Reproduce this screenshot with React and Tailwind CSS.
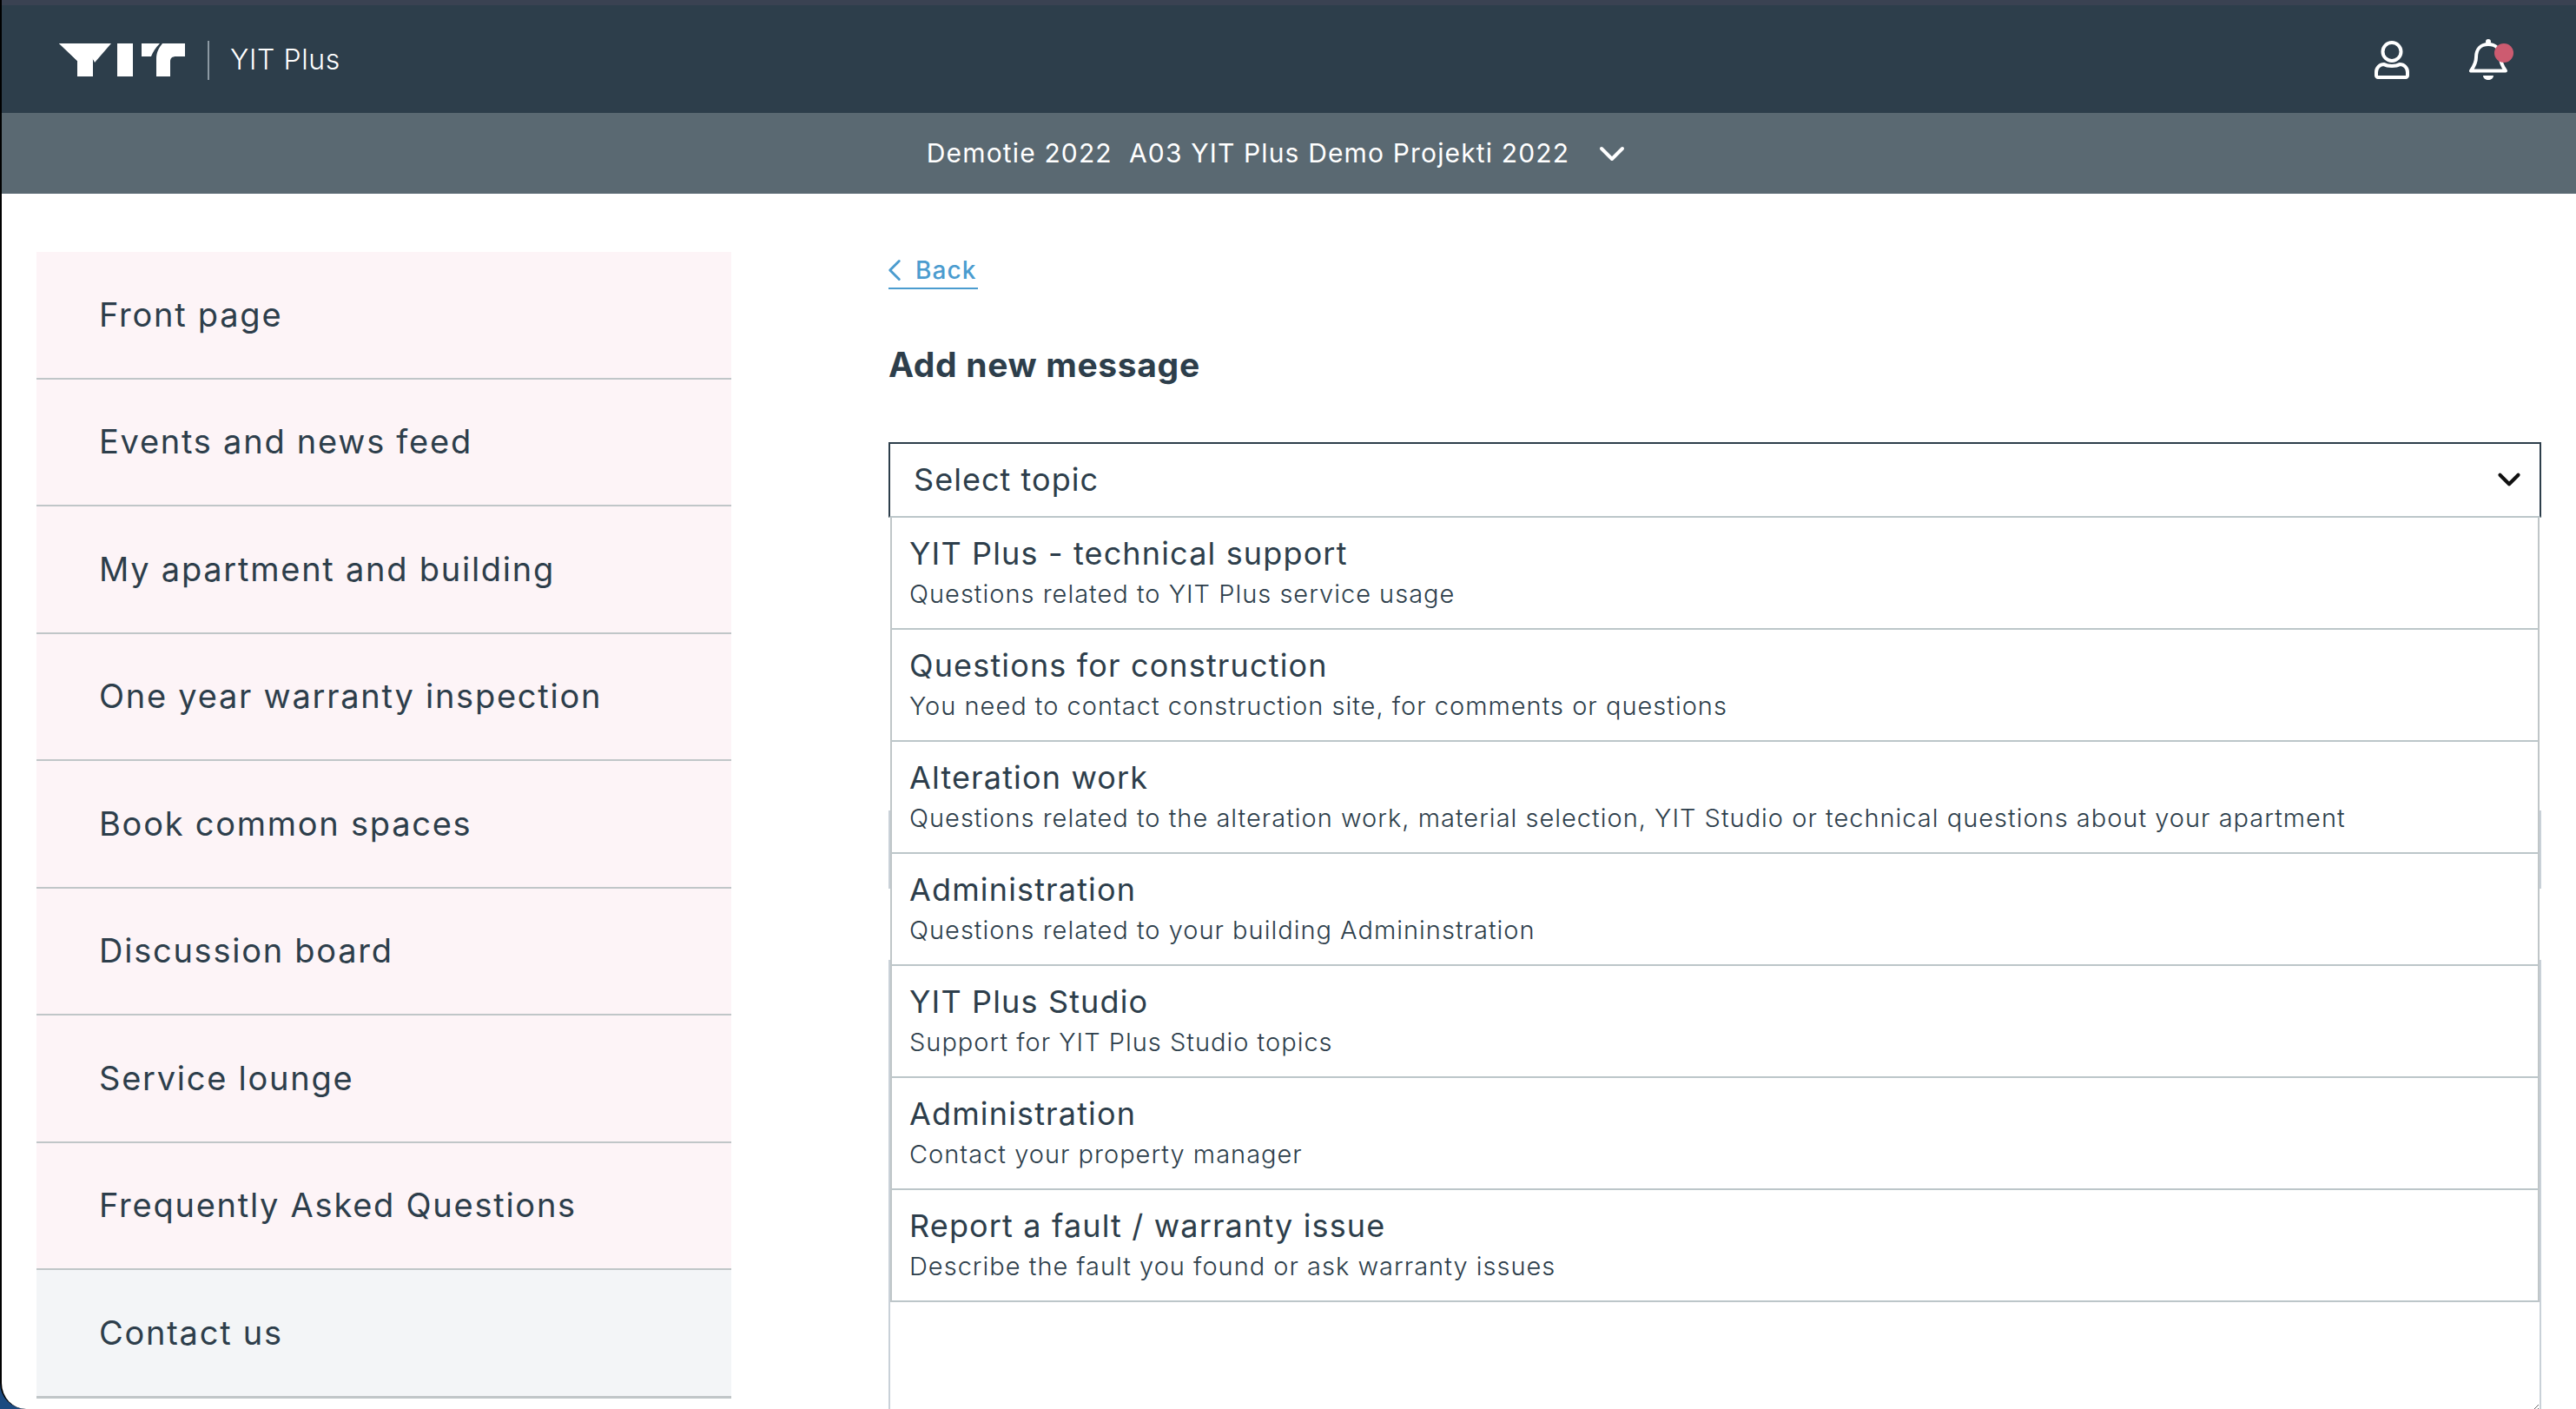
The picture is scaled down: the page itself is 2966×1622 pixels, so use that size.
import React from 'react';
import { ChevronDown, ChevronLeft } from 'lucide-react';

const navItems = [
  'Front page',
  'Events and news feed',
  'My apartment and building',
  'One year warranty inspection',
  'Book common spaces',
  'Discussion board',
  'Service lounge',
  'Frequently Asked Questions',
];

const topics = [
  ['YIT Plus - technical support', 'Questions related to YIT Plus service usage'],
  ['Questions for construction', 'You need to contact construction site, for comments or questions'],
  ['Alteration work', 'Questions related to the alteration work, material selection, YIT Studio or technical questions about your apartment'],
  ['Administration', 'Questions related to your building Admininstration'],
  ['YIT Plus Studio', 'Support for YIT Plus Studio topics'],
  ['Administration', 'Contact your property manager'],
  ['Report a fault / warranty issue', 'Describe the fault you found or ask warranty issues'],
];

const YitLogo = () => (
  <svg viewBox="0 0 145 38" className="h-[38px] w-[145px]" fill="#fff">
    <path d="M0 0H60L41 22C40 19 38 17 36 15L21 20Z" />
    <path d="M0 0H32C35 5 39 12 39 20V38H21V20Z" />
    <rect x="67" y="0" width="18" height="38" />
    <path d="M95 0H116C111 5 108 10 106 15H95Z" />
    <path d="M119 0H145V15H135C130 15 128 17 128 21V38H112V18C112 10 115 5 119 0Z" />
  </svg>
);

const UserIcon = () => (
  <svg viewBox="0 0 40 44" className="h-[44px] w-[40px]" fill="none" stroke="#fff" strokeWidth="4">
    <circle cx="20" cy="12.5" r="10.5" />
    <path d="M11 27c4 2.5 14 2.5 18 0 5 0 9 4 9 9v4c0 1-1 2-2 2H4c-1 0-2-1-2-2v-4c0-5 4-9 9-9z" strokeLinejoin="round" />
  </svg>
);

const BellIcon = () => (
  <div className="relative h-[48px] w-[44px]">
    <svg viewBox="0 0 44 48" className="h-[48px] w-[44px]" fill="none" stroke="#fff" strokeWidth="4" strokeLinejoin="round" strokeLinecap="round">
      <path d="M22 6c-9 0-14 6-14 15 0 7-3 11-6 15.5h40c-3-4.5-6-8.5-6-15.5 0-9-5-15-14-15z" />
      <circle cx="22" cy="3" r="3" fill="#fff" stroke="none" />
      <path d="M16 42h12c0 3-3 5-6 5s-6-2-6-5z" fill="#fff" stroke="none" />
    </svg>
    <span className="absolute left-[29px] top-[5px] h-[22px] w-[22px] rounded-full bg-[#cd5b70]" />
  </div>
);

export default function App() {
  return (
    <div className="h-[1622px] w-full overflow-hidden bg-[#1c4a80] font-['Inter',sans-serif] text-[#2d3e4b]">
      <div className="flex h-full flex-col overflow-hidden rounded-bl-[30px] border-l-2 border-black bg-white">
        <header className="flex h-[130px] shrink-0 items-center justify-between border-t-[6px] border-[#3a4252] bg-[#2d3e4b] pl-[66px] pr-[79px] pt-[2px]">
          <div className="flex items-center">
            <YitLogo />
            <div className="ml-[26px] h-[45px] w-[2px] bg-[#8c99a3]" />
            <span className="ml-[24px] text-[32px] font-light tracking-[0.6px] text-white">YIT Plus</span>
          </div>
          <div className="flex items-center gap-[69px]">
            <UserIcon />
            <BellIcon />
          </div>
        </header>
        <div className="flex h-[93px] shrink-0 items-center justify-center bg-[#5a6972] pr-[21px] text-white">
          <span className="text-[30px] font-normal tracking-[1.15px]">Demotie 2022&nbsp; A03 YIT Plus Demo Projekti 2022</span>
          <ChevronDown className="ml-[25px] h-[48px] w-[48px]" strokeWidth={2} />
        </div>
        <div className="flex min-h-0 flex-1 pt-[67px]">
          <nav className="ml-[40px] w-[800px] shrink-0">
            {navItems.map((label) => (
              <div key={label} className="flex h-[146.5px] items-center border-b-2 border-[#c0c6c8] bg-[#fdf4f7] pl-[72px] text-[38px] tracking-[1.75px]">
                {label}
              </div>
            ))}
            <div className="flex h-[148px] items-center border-b-[3px] border-[#c0c6c8] bg-[#f3f5f7] pl-[72px] text-[38px] tracking-[1.75px]">
              Contact us
            </div>
          </nav>
          <main className="ml-[181px] w-[1903px] shrink-0">
            <a className="mt-[7px] flex h-[36px] w-[103px] items-center border-b-2 border-[#4b9ccf] pb-[6px] text-[28px] font-medium leading-none tracking-[1.1px] text-[#4b9ccf]">
              <ChevronLeft className="ml-[-14px] h-[42px] w-[42px] shrink-0" strokeWidth={1.7} />
              <span className="ml-[3px]">Back</span>
            </a>
            <h1 className="mt-[62px] text-[39px] font-bold leading-[50px] tracking-[0.65px]">Add new message</h1>
            <div className="relative mt-[64px]">
              <div className="flex h-[87px] items-center justify-between border-2 border-[#2d3e4b] border-b-[#bcc6c9] pl-[27px] pr-[14px]">
                <span className="mt-[-2px] text-[36px] tracking-[1.05px]">Select topic</span>
                <ChevronDown className="mt-[-2px] h-[42px] w-[42px] text-[#111]" strokeWidth={2.4} />
              </div>
              <div className="absolute left-[2px] right-[2px] top-[87px] z-10 border-x-2 border-[#c0c6c8] bg-white">
                {topics.map(([title, desc], i) => (
                  <div key={i} className="h-[129px] border-b-2 border-[#bcc6c9] pl-[20px] pt-[16px]">
                    <div className="text-[36px] leading-[50px] tracking-[1.15px]">{title}</div>
                    <div className="text-[29px] font-light leading-[44px] tracking-[1px]">{desc}</div>
                  </div>
                ))}
              </div>
              <input className="mt-[337px] block h-[90px] w-full border-2 border-[#c9d1d8] outline-none" />
              <textarea className="mt-[82px] block h-[522px] w-full resize-y border-2 border-[#c9d1d8] outline-none" />
            </div>
          </main>
        </div>
      </div>
    </div>
  );
}
